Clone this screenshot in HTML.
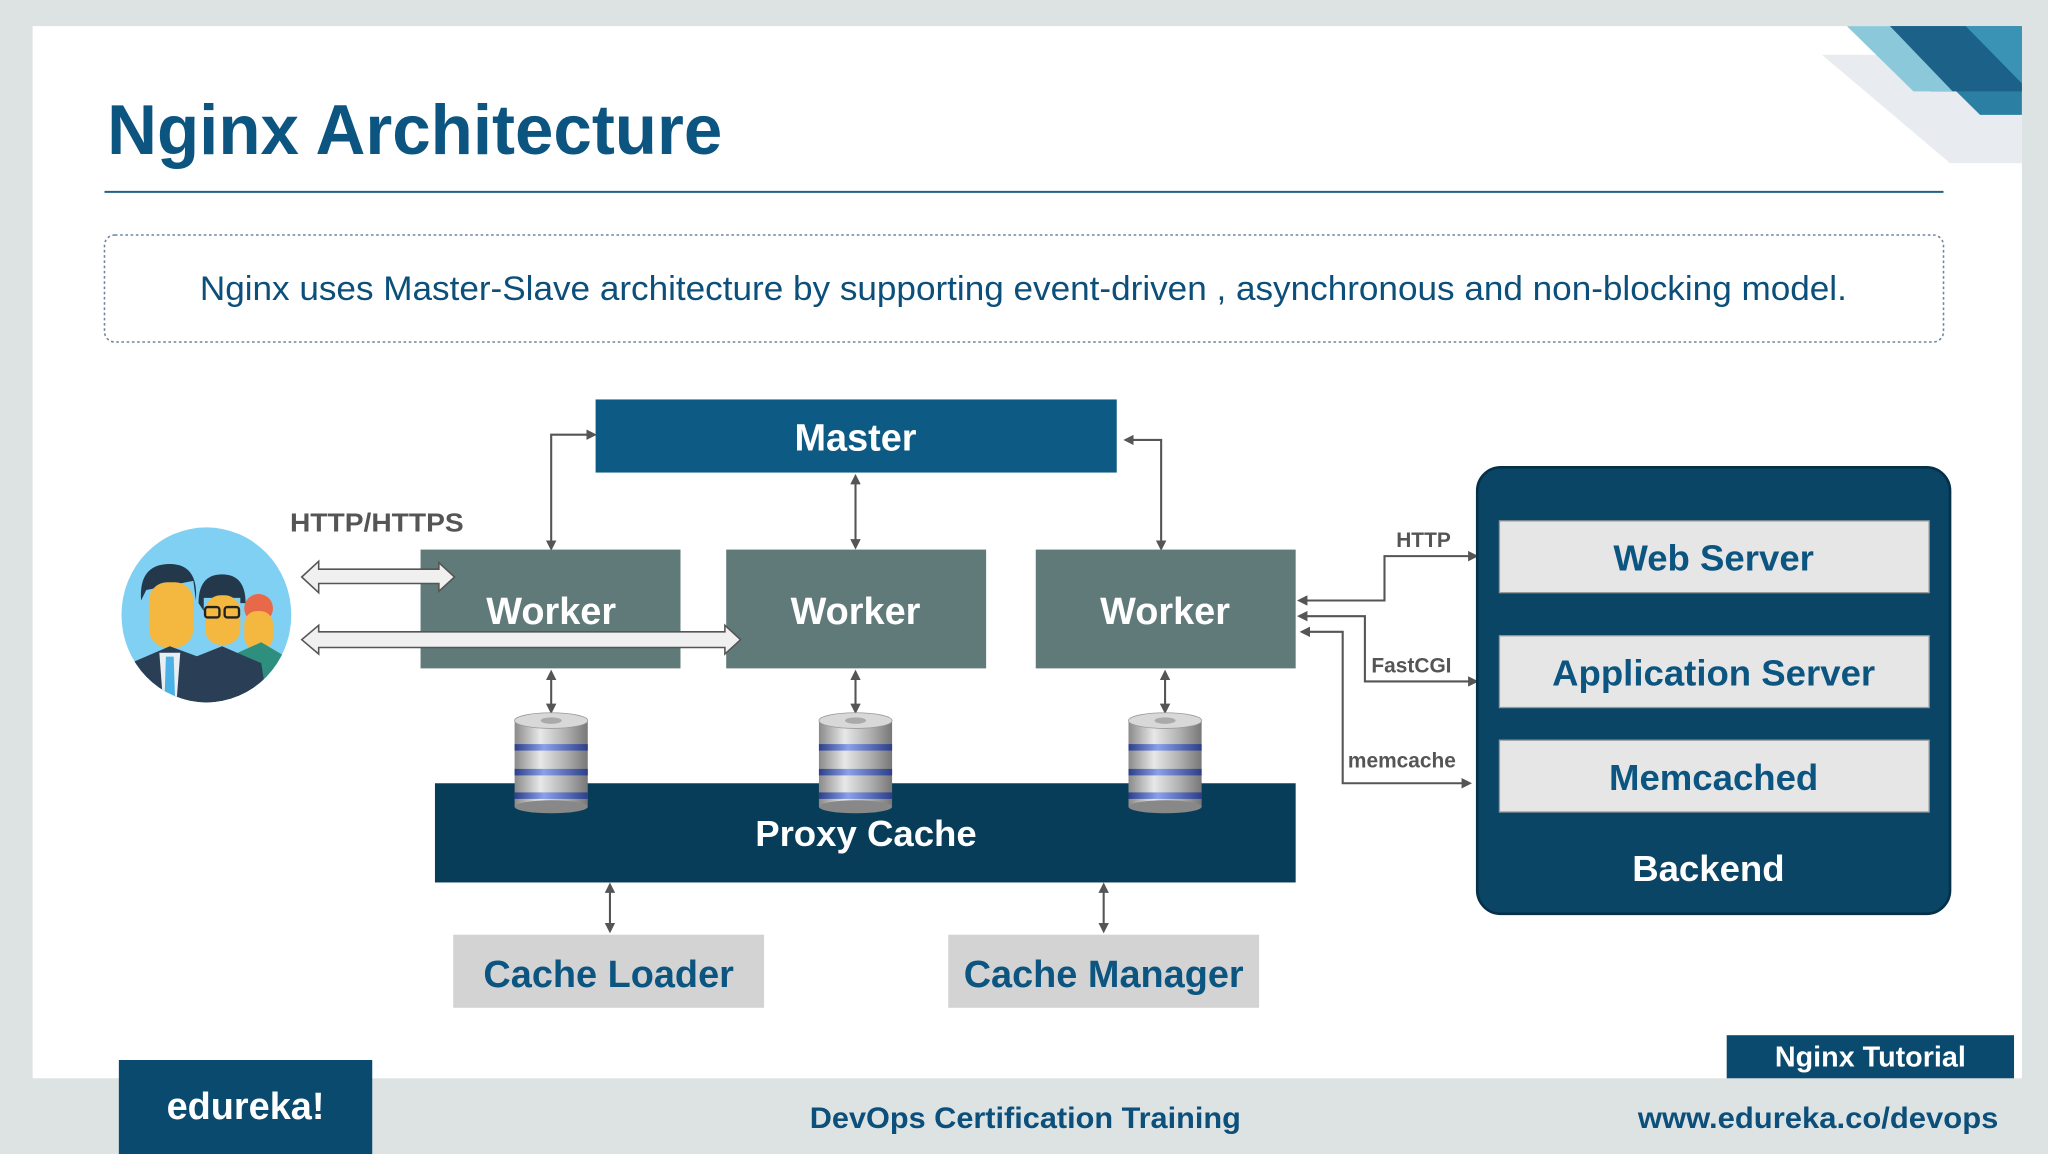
<!DOCTYPE html>
<html><head><meta charset="utf-8"><style>
html,body{margin:0;padding:0;background:#dde3e3;overflow:hidden}
svg{display:block}
text{font-family:"Liberation Sans",sans-serif;font-weight:bold}
</style></head><body>
<svg width="2048" height="1154" viewBox="0 0 1568 884" preserveAspectRatio="none" xmlns="http://www.w3.org/2000/svg">
<defs>
<marker id="ah" markerWidth="8" markerHeight="8" refX="6" refY="4" orient="auto-start-reverse" markerUnits="userSpaceOnUse"><path d="M0,0 L8,4 L0,8 z" fill="#555"/></marker>
<linearGradient id="cyl" x1="0" x2="1"><stop offset="0" stop-color="#8a8a8a"/><stop offset="0.35" stop-color="#e8e8e8"/><stop offset="0.7" stop-color="#b0b0b0"/><stop offset="1" stop-color="#777"/></linearGradient>
<linearGradient id="band" x1="0" x2="1"><stop offset="0" stop-color="#2c3f8a"/><stop offset="0.4" stop-color="#8aa0e8"/><stop offset="1" stop-color="#2c3f8a"/></linearGradient>
<g id="db">
<rect x="-28" y="4" width="56" height="66" fill="url(#cyl)"/>
<ellipse cx="0" cy="70" rx="28" ry="5" fill="#888"/>
<rect x="-28" y="22" width="56" height="5" fill="url(#band)"/>
<rect x="-28" y="41" width="56" height="5" fill="url(#band)"/>
<rect x="-28" y="59" width="56" height="5" fill="url(#band)"/>
<ellipse cx="0" cy="4" rx="28" ry="6" fill="#d8d8d8" stroke="#999" stroke-width="0.6"/>
<ellipse cx="0" cy="4" rx="8" ry="2.5" fill="#aaa"/>
</g>
</defs>
<rect width="1568" height="884" fill="#dde3e3"/>
<rect x="25" y="20" width="1523" height="806" fill="#fff"/>
<!-- corner deco -->
<polygon points="1395,42 1548,42 1548,125 1493,125" fill="#e8ebef"/>
<polygon points="1447,20 1548,20 1548,88 1516,88" fill="#2a7fa3"/>
<polygon points="1505,20 1548,20 1548,64" fill="#3a93b5"/>
<polygon points="1447,20 1505,20 1548,64 1548,70 1478,70" fill="#1c6188"/>
<polygon points="1414,20 1447,20 1495,70 1465,70" fill="#8ac8da"/>
<!-- title -->
<text x="82" y="118" font-size="54" fill="#0b5580" textLength="471" lengthAdjust="spacingAndGlyphs">Nginx Architecture</text>
<line x1="80" y1="147" x2="1488" y2="147" stroke="#1f6288" stroke-width="1.5"/>
<rect x="80" y="180" width="1408" height="82" rx="8" fill="#fff" stroke="#6a86a0" stroke-width="1.2" stroke-dasharray="2,2"/>
<text x="153" y="230" font-size="26" fill="#0b4f7a" textLength="1261" lengthAdjust="spacingAndGlyphs" style="font-weight:normal">Nginx uses Master-Slave architecture by supporting event-driven , asynchronous and non-blocking model.</text>
<!-- arrows -->
<g stroke="#555" stroke-width="1.6" fill="none">
<path d="M422,420 L422,333 L455,333" marker-start="url(#ah)" marker-end="url(#ah)"/>
<path d="M889,420 L889,337 L862,337" marker-start="url(#ah)" marker-end="url(#ah)"/>
<path d="M655,365 L655,419" marker-start="url(#ah)" marker-end="url(#ah)"/>
<path d="M422,515 L422,545" marker-start="url(#ah)" marker-end="url(#ah)"/>
<path d="M655,515 L655,545" marker-start="url(#ah)" marker-end="url(#ah)"/>
<path d="M892,515 L892,545" marker-start="url(#ah)" marker-end="url(#ah)"/>
<path d="M467,678 L467,713" marker-start="url(#ah)" marker-end="url(#ah)"/>
<path d="M845,678 L845,713" marker-start="url(#ah)" marker-end="url(#ah)"/>
<path d="M995,460 L1060,460 L1060,426 L1130,426" marker-start="url(#ah)" marker-end="url(#ah)"/>
<path d="M995,472 L1045,472 L1045,522 L1130,522" marker-start="url(#ah)" marker-end="url(#ah)"/>
<path d="M997,484 L1028,484 L1028,600 L1125,600" marker-start="url(#ah)" marker-end="url(#ah)"/>
</g>
<rect x="456" y="306" width="399" height="56" fill="#0d5a84"/>
<text x="655" y="345" font-size="29" fill="#fff" text-anchor="middle">Master</text>
<rect x="322" y="421" width="199" height="91" fill="#607a7a"/>
<rect x="556" y="421" width="199" height="91" fill="#607a7a"/>
<rect x="793" y="421" width="199" height="91" fill="#607a7a"/>
<text x="422" y="478" font-size="29" fill="#fff" text-anchor="middle">Worker</text>
<text x="655" y="478" font-size="29" fill="#fff" text-anchor="middle">Worker</text>
<text x="892" y="478" font-size="29" fill="#fff" text-anchor="middle">Worker</text>
<g fill="#f0f0f0" stroke="#555" stroke-width="1.2">
<path d="M231,442 L244,430 L244,436 L336,436 L336,431 L348,442 L336,453 L336,447 L244,447 L244,454 z"/>
<path d="M231,490 L244,479 L244,484 L555,484 L555,479 L567,490 L555,501 L555,496 L244,496 L244,501 z"/>
</g>
<text x="222" y="407" font-size="20" fill="#555" textLength="133" lengthAdjust="spacingAndGlyphs">HTTP/HTTPS</text>
<!-- users -->
<ellipse cx="158" cy="471" rx="65" ry="67" fill="#7fd0f2"/>
<clipPath id="cc"><ellipse cx="158" cy="471" rx="65" ry="67"/></clipPath>
<g clip-path="url(#cc)">
<circle cx="198" cy="466" r="11" fill="#e8694a"/>
<rect x="187" y="468" width="22" height="30" rx="10" fill="#f4b740"/>
<path d="M172,540 L182,500 L200,492 L222,505 L222,540 z" fill="#2f8f7f"/>
<path d="M152,462 Q152,440 170,440 Q188,440 188,462 L184,462 L184,458 L156,458 L156,468 z" fill="#24384c"/>
<rect x="157" y="456" width="27" height="38" rx="12" fill="#f4b740"/>
<rect x="157" y="465" width="11" height="8" rx="2" fill="none" stroke="#222" stroke-width="1.8"/>
<rect x="172" y="465" width="11" height="8" rx="2" fill="none" stroke="#222" stroke-width="1.8"/>
<path d="M140,540 L145,505 L170,495 L200,508 L205,540 z" fill="#2a3f55"/>
<path d="M108,460 Q106,432 130,432 Q152,432 150,460 L148,445 L112,452 z" fill="#24384c"/>
<rect x="114" y="446" width="34" height="50" rx="14" fill="#f4b740"/>
<path d="M92,540 L100,508 L130,495 L165,508 L172,540 z" fill="#2a3f55"/>
<path d="M122,500 L138,500 L135,540 L125,540 z" fill="#e8eef2"/>
<path d="M127,503 L133,503 L134,535 L126,535 z" fill="#4ab2e6"/>
</g>
<rect x="333" y="600" width="659" height="76" fill="#083d5a"/>
<text x="663" y="648" font-size="28" fill="#fff" text-anchor="middle">Proxy Cache</text>
<use href="#db" x="422" y="548"/>
<use href="#db" x="655" y="548"/>
<use href="#db" x="892" y="548"/>
<rect x="347" y="716" width="238" height="56" fill="#d3d3d3"/>
<rect x="726" y="716" width="238" height="56" fill="#d3d3d3"/>
<text x="466" y="756" font-size="29" fill="#0b5580" text-anchor="middle">Cache Loader</text>
<text x="845" y="756" font-size="29" fill="#0b5580" text-anchor="middle">Cache Manager</text>
<text x="1069" y="419" font-size="16" fill="#555">HTTP</text>
<text x="1050" y="515" font-size="16" fill="#555">FastCGI</text>
<text x="1032" y="588" font-size="16" fill="#555">memcache</text>
<rect x="1131" y="358" width="362" height="342" rx="18" fill="#0a4566" stroke="#063048" stroke-width="2"/>
<rect x="1148" y="399" width="329" height="55" fill="#e6e6e6" stroke="#999"/>
<rect x="1148" y="487" width="329" height="55" fill="#e6e6e6" stroke="#999"/>
<rect x="1148" y="567" width="329" height="55" fill="#e6e6e6" stroke="#999"/>
<text x="1312" y="437" font-size="28" fill="#0b5580" text-anchor="middle">Web Server</text>
<text x="1312" y="525" font-size="28" fill="#0b5580" text-anchor="middle">Application Server</text>
<text x="1312" y="605" font-size="28" fill="#0b5580" text-anchor="middle">Memcached</text>
<text x="1308" y="675" font-size="28" fill="#fff" text-anchor="middle">Backend</text>
<rect x="1322" y="793" width="220" height="33" fill="#0b4a6f"/>
<text x="1432" y="817" font-size="22" fill="#fff" text-anchor="middle">Nginx Tutorial</text>
<rect x="91" y="812" width="194" height="72" fill="#0b4a6f"/>
<text x="188" y="857" font-size="29" fill="#fff" text-anchor="middle">edureka!</text>
<text x="785" y="864" font-size="23" fill="#0b4f7a" text-anchor="middle" textLength="330" lengthAdjust="spacingAndGlyphs">DevOps Certification Training</text>
<text x="1392" y="864" font-size="23" fill="#0b4f7a" text-anchor="middle" textLength="276" lengthAdjust="spacingAndGlyphs">www.edureka.co/devops</text>
</svg>
</body></html>
